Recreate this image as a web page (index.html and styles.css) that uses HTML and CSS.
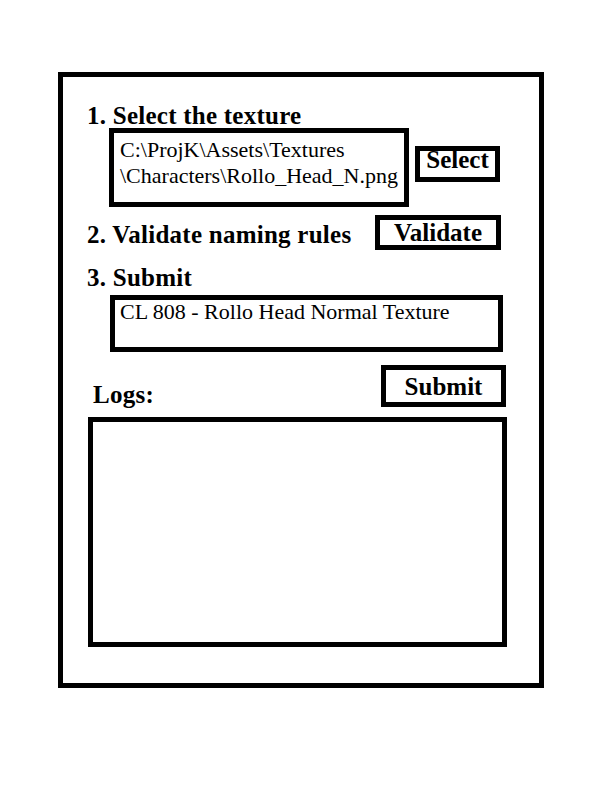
FILE: index.html
```html
<!DOCTYPE html>
<html>
<head>
    <title>Texture Submit Tool</title>
    <link rel="stylesheet" href="styles.css">
</head>
<body>
    <div class="frame">
        <h2 class="step step-one">1. Select the texture</h2>
        <div class="row">
            <div class="path-box">C:\ProjK\Assets\Textures<br>\Characters\Rollo_Head_N.png</div>
            <button class="btn btn-select">Select</button>
        </div>

        <div class="row">
            <h2 class="step step-two">2. Validate naming rules</h2>
            <button class="btn btn-validate">Validate</button>
        </div>

        <h2 class="step step-three">3. Submit</h2>
        <div class="desc-box">CL 808 - Rollo Head Normal Texture</div>

        <div class="row">
            <h2 class="logs-label">Logs:</h2>
            <button class="btn btn-submit">Submit</button>
        </div>
        <div class="logs-box"></div>
    </div>
</body>
</html>
```

FILE: styles.css
```css
body {
    margin: 0;
    padding: 0;
    background-color: #ffffff;
    font-family: "Liberation Serif", "Times New Roman", serif;
    color: #000000;
}

.frame {
    box-sizing: border-box;
    width: 486px;
    height: 616px;
    margin: 72px 0 0 58px;
    border: 5px solid #000;
}

.row {
    display: flex;
    align-items: flex-start;
}

.step, .logs-label {
    margin: 0;
    font-size: 25px;
    font-weight: bold;
    line-height: 24px;
    letter-spacing: 0.25px;
}

.step {
    padding-left: 24px;
}

.step-one {
    margin-top: 27px;
}

.step-two {
    margin-top: 16px;
}

.step-three {
    margin-top: 16px;
}

.logs-label {
    margin: 31px 0 0 30px;
}

.path-box {
    box-sizing: border-box;
    width: 300px;
    height: 79px;
    margin-left: 46px;
    padding: 4px 0 0 6px;
    border: 5px solid #000;
    font-size: 22px;
    line-height: 26px;
}

.desc-box {
    box-sizing: border-box;
    width: 393px;
    height: 57px;
    margin: 5px 0 0 47px;
    padding: 1px 0 0 5px;
    border: 5px solid #000;
    font-size: 22px;
    line-height: 22px;
}

.logs-box {
    box-sizing: border-box;
    width: 419px;
    height: 230px;
    margin: 10px 0 0 25px;
    border: 5px solid #000;
}

.btn {
    box-sizing: border-box;
    padding: 0;
    border: 5px solid #000;
    border-radius: 0;
    background-color: #ffffff;
    color: #000;
    font-family: "Liberation Serif", "Times New Roman", serif;
    font-size: 25px;
    font-weight: bold;
    text-align: center;
    display: block;
}

.btn-select {
    width: 85px;
    height: 36px;
    margin: 18px 0 0 6px;
    line-height: 18px;
    padding-bottom: 8px;
}

.btn-validate {
    width: 126px;
    height: 35px;
    margin: 8px 38px 0 auto;
    line-height: 25px;
}

.btn-submit {
    width: 125px;
    height: 42px;
    margin: 13px 33px 0 auto;
    line-height: 27px;
}
```
